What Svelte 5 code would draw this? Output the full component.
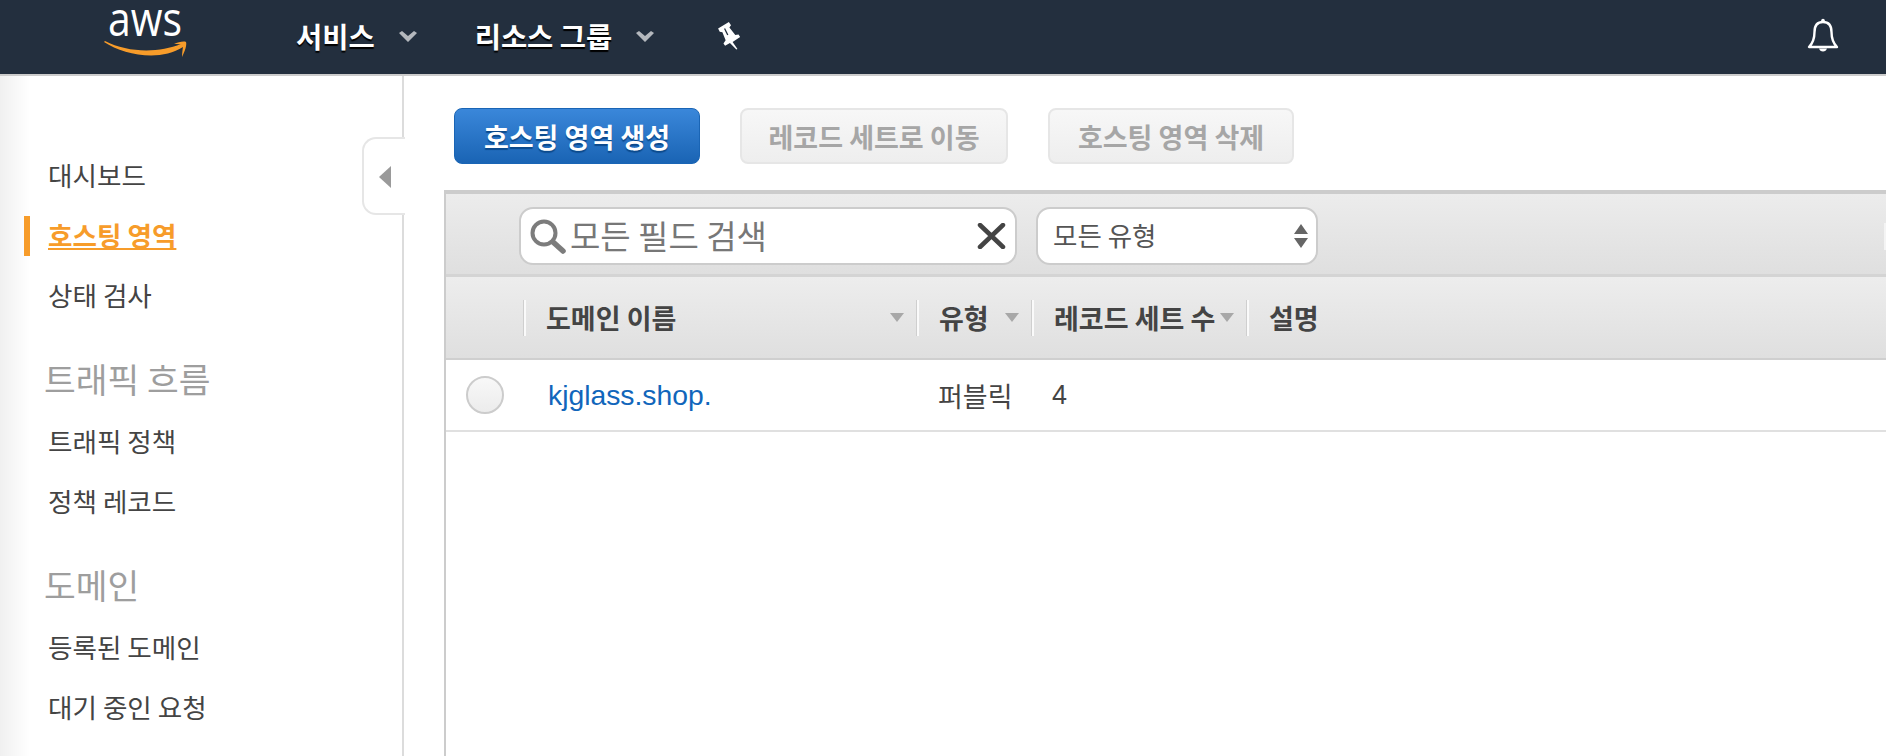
<script>
  const navItems = ['서비스', '리소스 그룹'];
  const columns = [
    { label: '도메인 이름', sort: true },
    { label: '유형', sort: true },
    { label: '레코드 세트 수', sort: true },
    { label: '설명', sort: false },
  ];
  const sideGroups = [
    { items: ['대시보드', '호스팅 영역', '상태 검사'] },
    { title: '트래픽 흐름', items: ['트래픽 정책', '정책 레코드'] },
    { title: '도메인', items: ['등록된 도메인', '대기 중인 요청'] },
  ];
</script>

<div class="console">
  <header class="topbar">
    <svg class="logo" width="90" height="58" viewBox="0 0 90 58" aria-label="aws">
      <text x="4" y="30" textLength="74" lengthAdjust="spacingAndGlyphs" class="logo-text">aws</text>
      <path d="M0 36 C20 49 56 56 79 41 C82 39 80 37 77 38 C55 47 24 47 1 35 Z" fill="#f79c2a" />
      <path d="M70 38 C74 36 80 35 82 36 C83 39 81 45 78 51 C78 46 79 42 79 40 C77 38 74 38 70 38 Z" fill="#f79c2a" />
    </svg>
    <nav class="menu">
      {#each navItems as item}
        <span class="menu-item">
          {item}
          <svg class="chevron" width="18" height="11" viewBox="0 0 18 11"><path d="M0 2 L3 0 L9 5 L15 0 L18 2 L9 11 Z" fill="#b4b8bd" /></svg>
        </span>
      {/each}
      <svg class="pin" width="28" height="29" viewBox="0 0 26 27">
        <path d="M1 7 L11 1 L13 4 L11.5 6 L17 13 L20 12.5 L21.5 15 L14.5 19.5 L19 26 L18 26.5 L12 20.5 L7.5 23 L6 21 L8 18 L5 10.5 L2.5 10 Z" fill="#fff" />
        <path d="M7 7 L10 13" stroke="#232f3e" stroke-width="1.2" />
      </svg>
    </nav>
    <svg class="bell" width="32" height="35" viewBox="0 0 32 35" fill="none">
      <path d="M16 4 C9 4 7.5 9 7.5 14 C7.5 21 6 25 2 29 L30 29 C26 25 24.5 21 24.5 14 C24.5 9 23 4 16 4 Z" stroke="#fff" stroke-width="2.4" stroke-linejoin="round" />
      <circle cx="16" cy="2.6" r="1.8" fill="#fff" />
      <path d="M12 30.5 A4.2 4.2 0 0 0 20 30.5 Z" fill="#fff" />
    </svg>
  </header>

  <div class="body">
    <aside class="sidebar">
      {#each sideGroups as group}
        {#if group.title}<h2 class="side-title">{group.title}</h2>{/if}
        <ul>
          {#each group.items as item}
            <li><span class="side-link" class:active={item === '호스팅 영역'}>{item}</span></li>
          {/each}
        </ul>
      {/each}
      <div class="collapse">
        <svg width="12" height="22" viewBox="0 0 12 22"><path d="M12 0 L12 22 L0 11 Z" fill="#9a9a9a" /></svg>
      </div>
    </aside>

    <main class="main">
      <div class="toolbar">
        <button class="btn primary">호스팅 영역 생성</button>
        <button class="btn second" disabled>레코드 세트로 이동</button>
        <button class="btn third" disabled>호스팅 영역 삭제</button>
      </div>

      <section class="table">
        <div class="filters">
          <div class="search">
            <svg width="36" height="35" viewBox="0 0 36 35" fill="none">
              <circle cx="14" cy="14" r="11.5" stroke="#7c7c7c" stroke-width="4" />
              <path d="M23 23 L33 32" stroke="#7c7c7c" stroke-width="5.5" stroke-linecap="round" />
            </svg>
            <span class="placeholder">모든 필드 검색</span>
            <svg class="clear" width="29" height="26" viewBox="0 0 29 26"><path d="M3 2 L26 24 M26 2 L3 24" stroke="#444" stroke-width="4.5" stroke-linecap="round" /></svg>
          </div>
          <div class="select">
            <span>모든 유형</span>
            <svg width="14" height="24" viewBox="0 0 14 24"><path d="M7 0 L14 10 L0 10 Z M0 14 L14 14 L7 24 Z" fill="#666" /></svg>
          </div>
          <span class="filter-end"></span>
        </div>

        <div class="head">
          <span></span>
          {#each columns as col}
            <div class="head-cell">
              <span>{col.label}</span>
              {#if col.sort}
                <svg width="14" height="9" viewBox="0 0 14 9"><path d="M0 0 L14 0 L7 9 Z" fill="#a8a8a8" /></svg>
              {/if}
            </div>
          {/each}
        </div>

        <div class="row">
          <span class="radio-cell"><span class="radio"></span></span>
          <a href="#zone" class="domain">kjglass.shop.</a>
          <span class="cell">퍼블릭</span>
          <span class="cell count">4</span>
          <span></span>
        </div>
      </section>
    </main>
  </div>
</div>

<style>
  :global(body) {
    margin: 0;
    overflow: hidden;
    background: #fff;
  }

  .console {
    width: 1886px;
    height: 756px;
    overflow: hidden;
    font-family: "Noto Sans CJK KR", "Liberation Sans", sans-serif;
    color: #444;
  }

  .topbar {
    height: 74px;
    border-bottom: 2px solid #cccccc;
    background: #232f3e;
    display: flex;
    align-items: flex-start;
    padding-left: 104px;
    box-sizing: content-box;
  }

  .logo {
    margin-top: 6px;
    flex: none;
    overflow: visible;
  }

  .logo-text {
    font-family: "Open Sans", sans-serif;
    font-size: 48px;
    fill: #fff;
  }

  .menu {
    display: flex;
    align-items: center;
    height: 70px;
    margin-left: 102px;
  }

  .menu-item {
    display: flex;
    align-items: center;
    gap: 24px;
    margin-right: 58px;
    font-size: 28.5px;
    font-weight: 700;
    color: #fff;
    text-shadow: 0 2px 1px #000;
    white-space: nowrap;
  }

  .pin {
    margin-left: 5px;
  }

  .chevron {
    margin-top: 2px;
  }

  .bell {
    margin-left: auto;
    margin-top: 18px;
    margin-right: 47px;
  }

  .body {
    display: flex;
    height: 680px;
  }

  .sidebar {
    position: relative;
    width: 402px;
    flex: none;
    box-sizing: content-box;
    border-right: 2px solid #dcdcdc;
    background: linear-gradient(to right, #f0f0f0, #fff 30px);
    padding-top: 70px;
  }

  ul {
    list-style: none;
    margin: 0;
    padding: 0;
  }

  li {
    height: 60px;
    display: flex;
    align-items: center;
    padding-left: 24px;
  }

  .side-link {
    display: block;
    height: 40px;
    line-height: 38px;
    border-left: 6px solid transparent;
    padding-left: 18px;
    font-size: 26.6px;
    color: #444;
  }

  .side-link.active {
    border-left-color: #f79c2a;
    color: #f79c2a;
    font-weight: 700;
    text-decoration: underline;
  }

  .side-title {
    margin: 22px 0 4px 44px;
    height: 60px;
    line-height: 60px;
    font-size: 34.5px;
    font-weight: 400;
    color: #9e9e9e;
  }

  /* sits over the sidebar's right border */
  .collapse {
    position: absolute;
    top: 61px;
    left: 362px;
    width: 40px;
    height: 72px;
    box-sizing: content-box;
    border: 2px solid #e6e6e6;
    border-right: 0;
    border-radius: 14px 0 0 14px;
    background: #fff;
    display: flex;
    align-items: center;
    padding: 2px 0 0 1px;
    justify-content: center;
  }

  .main {
    flex: 1;
    min-width: 0;
  }

  .toolbar {
    display: flex;
    padding: 32px 0 0 50px;
  }

  .btn {
    height: 56px;
    box-sizing: border-box;
    border-radius: 8px;
    font-family: inherit;
    font-size: 27px;
    font-weight: 700;
    padding: 0;
    white-space: nowrap;
  }

  .primary {
    width: 246px;
    border: 1px solid #1a65b5;
    background: linear-gradient(#3a87da, #1a64b4);
    color: #fff;
    text-shadow: 0 2px 1px #0c4a8c;
  }

  .second,
  .third {
    border: 2px solid #e6e6e6;
    background: linear-gradient(#f7f7f7, #eeeeee);
    color: #a6a6a6;
  }

  .second {
    width: 268px;
    margin-left: 40px;
  }

  .third {
    width: 246px;
    margin-left: 40px;
  }

  .table {
    margin: 26px 0 0 40px;
    border-top: 4px solid #cccccc;
    border-left: 2px solid #cccccc;
    height: 600px;
  }

  .filters {
    height: 83px;
    box-sizing: border-box;
    border-bottom: 3px solid #d4d4d4;
    background: linear-gradient(#ececec, #dfdfdf);
    display: flex;
    align-items: flex-start;
    padding: 13px 0 0 73px;
  }

  .search,
  .select {
    height: 58px;
    box-sizing: border-box;
    border: 2px solid #cccccc;
    border-radius: 14px;
    background: #fff;
    display: flex;
    align-items: center;
  }

  .search {
    width: 498px;
    padding: 0 9px;
    gap: 4px;
  }

  .placeholder {
    font-size: 33px;
    line-height: 54px;
    margin-top: -2px;
    color: #777;
  }

  .clear {
    margin-left: auto;
  }

  .select {
    width: 282px;
    margin-left: 19px;
    padding: 0 8px 0 15px;
    justify-content: space-between;
    font-size: 26.5px;
    color: #555;
  }

  .select span {
    margin-top: -3px;
  }

  .filter-end {
    width: 2px;
    height: 27px;
    background: #f4f4f4;
    margin: 16px 0 0 auto;
  }

  .head {
    height: 83px;
    box-sizing: border-box;
    border-bottom: 2px solid #cfcfcf;
    background: linear-gradient(#ededed, #dfdfdf);
    display: grid;
    grid-template-columns: 78px 393px 115px 215px 1fr;
    align-items: center;
  }

  .head-cell {
    height: 36px;
    box-sizing: border-box;
    border-left: 2px solid #fafafa;
    box-shadow: -1px 0 0 #cfcfcf;
    padding: 0 13px 0 20px;
    display: flex;
    align-items: center;
    justify-content: space-between;
    font-size: 27px;
    font-weight: 700;
    color: #444;
    white-space: nowrap;
  }

  .row {
    height: 72px;
    box-sizing: border-box;
    border-bottom: 2px solid #e0e0e0;
    display: grid;
    grid-template-columns: 78px 394px 114px 215px 1fr;
    align-items: center;
  }

  .radio-cell {
    display: flex;
    padding-left: 20px;
  }

  .radio {
    width: 38px;
    height: 38px;
    box-sizing: border-box;
    border: 2px solid #cccccc;
    border-radius: 50%;
    background: linear-gradient(#f8f8f8, #ececec);
  }

  .domain {
    padding-left: 24px;
    font-family: "Liberation Sans", sans-serif;
    font-size: 28.3px;
    color: #1166bb;
    text-decoration: none;
  }

  .cell {
    padding-left: 20px;
    font-size: 27px;
    color: #444;
  }

  .count {
    font-family: "Liberation Sans", sans-serif;
  }
</style>
